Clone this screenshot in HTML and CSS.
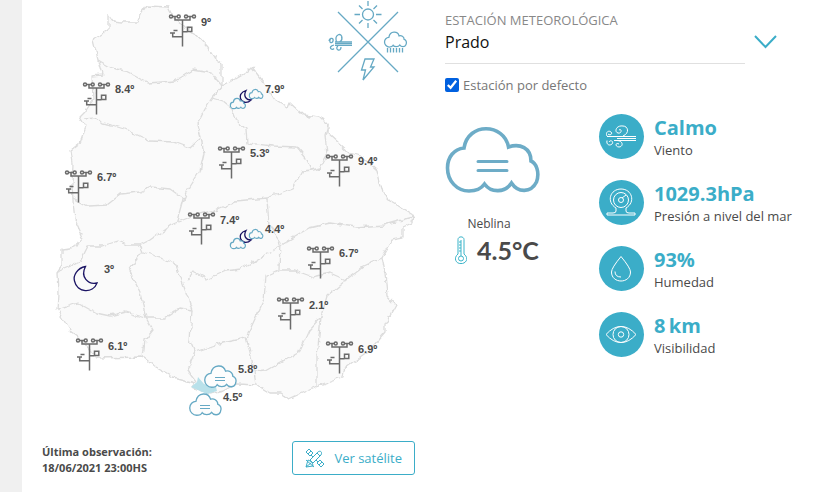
FILE: index.html
```
<!DOCTYPE html>
<html lang="es">
<head>
<meta charset="utf-8">
<title>Estado actual</title>
<link rel="stylesheet" href="styles.css">
</head>
<body>
<main class="panel">
  <section class="overview">
    <svg class="map" viewBox="42 0 373 420" role="img" aria-label="Mapa de estaciones">
      <defs>
        <filter id="coast" x="-5%" y="-5%" width="110%" height="110%">
          <feTurbulence type="fractalNoise" baseFrequency="0.13" numOctaves="2" seed="4" result="n"/>
          <feDisplacementMap in="SourceGraphic" in2="n" scale="6" xChannelSelector="R" yChannelSelector="G"/>
        </filter>
        <g id="mast" fill="none" stroke="#6b6b6b" stroke-width="1.500">
          <circle cx="2" cy="2" r="1.5"/><circle cx="9.7" cy="2" r="1.5"/><circle cx="17" cy="2" r="1.5"/><circle cx="25" cy="2" r="1.5"/>
          <path d="M3.5 2H8M18.500 2H23.500M6 2.500V5.500H21V2.500M13.500 5.500V32M13.500 17.200H18.500M18.500 12.700h4.300v4.300h-4.300zM13.500 22.200H3.700V18.500M1 18.500H6M4.500 16h4"/>
        </g>
        <path id="cloud" d="M18 22C9 22 1 30 1 40C1 51 10 60 20 60C27 60 33 57 35 53C40 60 55 61 61 52C66 60 80 62 85 51C90 41 85 32 78 30C78 18 66 13 58 16C53-3 23-5 18 22Z" transform="translate(1 1)"/>
        <g id="fog">
          <use href="#cloud" transform="scale(.365)" fill="#fdfdfd" stroke="#66a9c4" stroke-width="3.600"/>
          <path d="M11 12.500H21M11 15.500H21" stroke="#66a9c4"/>
        </g>
        <g id="night">
          <path d="M16 4.500C12 6 9.500 9 10.500 12.500C11.500 16.500 17 18 21 14C16 14 13 10 16 4.500Z" fill="none" stroke="#1b1464" stroke-width="1.300"/>
          <use href="#cloud" transform="translate(0 12) scale(.175)" fill="#fafafa" stroke="#66a9c4" stroke-width="7"/>
          <use href="#cloud" transform="translate(19 3) scale(.157)" fill="#fafafa" stroke="#66a9c4" stroke-width="7"/>
        </g>
      </defs>
      <g filter="url(#coast)" stroke="#dcdcdc" stroke-width="1.300" stroke-linejoin="round">
        <path fill="#fafafa" d="M108 14L113 21L123 22L138 22L142 13L147 6L168 7L172 15L184 28L195 33L208 47L215 58L222 63L222 86L235 79L247 72L252 67L262 80L275 100L287 107L289 102L303 115L320 117L328 125L328 133L350 153L363 157L377 170L383 193L392 202L413 215L412 223L403 227L403 238L392 240L382 258L385 272L387 295L396 305L385 325L385 332L367 353L343 370L342 377L317 386L289 399L280 393L270 393L257 385L237 384L224 391L208 394L192 387L195 383L173 377L155 367L143 357L97 358L77 335L70 330L57 310L58 295L57 272L62 265L62 250L75 248L82 235L75 220L73 200L72 185L73 163L71 150L80 143L86 127L80 117L85 112L93 100L92 76L102 75L98 60L93 40L108 30Z"/>
        <g fill="none">
          <path d="M98 60L112 68L125 71L148 83L175 81L193 70L211 73L222 86L212 98L205 108L197 124L201 138L190 148L174 142L150 141L125 129L112 125L102 123L95 117L85 118"/>
          <path d="M212 98L222 101L233 110L237 121L246 129L247 143L273 146L297 147L306 158L312 170L320 168L327 155L325 135L328 125"/>
          <path d="M201 138L204 153L200 171L188 190L184 200L178 222L171 225M73 198L88 206L107 205L121 194L140 192L151 187L170 189L184 199"/>
          <path d="M171 225L150 240L140 245L128 245L118 241L102 246L88 246L80 262L57 272M140 245L143 252L163 258L176 265L181 279L187 295L192 310L180 308L165 318L146 318L140 292L129 270L142 252"/>
          <path d="M178 223L200 214L218 209L236 201L267 198L293 188L302 171L312 170M267 198L269 226L280 242L279 270L266 276L264 300L246 338L218 344L195 352L187 370L196 382"/>
          <path d="M187 280L193 272L207 279L225 271L241 269L263 256L284 243L309 228L330 223L356 227L384 225L413 217"/>
          <path d="M280 270L294 270L313 277L330 273L346 280L363 267L382 258M346 280L327 296L321 317L309 330L299 352L265 371L255 372L246 338"/>
          <path d="M57 310L78 303L96 313L110 316L126 312L146 318L153 330L145 340L143 357M192 310L190 340L195 352M321 317L317 356L317 385M255 372L257 385"/>
        </g>
      </g>
      <path d="M191 387L197 382L198 377L204 384L216 387L217 391L207 394Z" fill="#b9e1ea"/>

      <g stroke="#66a9c4" fill="none" stroke-width="1.300">
        <path d="M338 12L398 72M398 12L338 72"/>
        <circle cx="368" cy="14.500" r="5.500"/>
        <path d="M368 1V6M368 23V28M354.500 14.500H360M376 14.500H381.500M359 5.500L362.500 9M377 5.500L373.500 9M359 23.500L362.500 20M377 23.500L373.500 20M365 59H374L370.500 67H374L363 80L365.500 70H361.500Z"/>
        <use href="#cloud" transform="translate(384 31.500) scale(.255)" stroke-width="5"/>
        <path d="M387.500 48V52.500M390.500 48V52.500M393.500 48V52.500M396.500 48V52.500M399.500 48V52.500M402.500 48V52.500"/>
        <path d="M335 42H352M335 43.700H352M335 45.400H352M336 41.800C340 43 343 40 341.500 37M336.500 42C334 34 342 32 342 38M329 41C330 37 334 38 333 41S328 43 331 38M334 45C327 47 332 51 334 48.500M338 46C334 49 341 53 341 47"/>
      </g>

      <use href="#mast" x="169" y="14.500"/><use href="#mast" x="83" y="82.500"/><use href="#mast" x="218" y="146.500"/><use href="#mast" x="326" y="154.500"/><use href="#mast" x="65" y="170.500"/><use href="#mast" x="188" y="212.500"/><use href="#mast" x="307" y="246.500"/><use href="#mast" x="277" y="297.500"/><use href="#mast" x="76" y="338.500"/><use href="#mast" x="326" y="341.500"/>
      <use href="#night" x="230" y="86"/><use href="#night" x="230" y="226"/>
      <path d="M85.500 266.500C77 268 73 276 74.500 281C77 293 93 294 97 283C88 285 80 277 85.500 266.500Z" fill="none" stroke="#1b1464" stroke-width="1.300"/>
      <use href="#fog" x="204" y="365"/><use href="#fog" x="189" y="393"/>
      <g class="temps">
        <text x="201" y="26">9º</text><text x="115" y="93">8.4º</text><text x="265" y="93">7.9º</text><text x="250" y="157">5.3º</text><text x="358" y="165">9.4º</text><text x="97" y="181">6.7º</text><text x="220" y="224">7.4º</text><text x="265" y="233">4.4º</text><text x="339" y="257">6.7º</text><text x="104" y="273">3º</text><text x="309" y="309">2.1º</text><text x="108" y="350">6.1º</text><text x="358" y="353">6.9º</text><text x="238" y="373">5.8º</text><text x="223" y="401">4.5º</text>
      </g>
    </svg>
    <footer class="map-foot">
      <p class="updated">Última observación:<br>18/06/2021 23:00HS</p>
      <button class="satellite" type="button">
        <svg width="20" height="20" viewBox="0 0 20 20" fill="none" stroke="currentColor" aria-hidden="true">
          <path d="M1 4L4 1L8 5L5 8ZM3 6L6 3M12 15L15 12L19 16L16 19ZM14 17L17 14M5 12L12 5C14 2 18 3 16 7L8 15ZM6 7L8 9M11 12L13 14M1 12L9 19M1 19L3 12C6 13 8 15 8 18ZM1 19L6 15M12 5L15 8"/>
        </svg>
        Ver satélite
      </button>
    </footer>
  </section>

  <section class="station">
    <div class="picker">
      <div class="picker-field">
        <label for="station">ESTACIÓN METEOROLÓGICA</label>
        <select id="station"><option>Prado</option></select>
      </div>
      <svg class="chevron" width="24" height="16" viewBox="0 0 24 16" fill="none" stroke="#3badc8" stroke-width="2" aria-hidden="true"><path d="M2 2L12.500 13L23 2"/></svg>
    </div>
    <label class="default"><input type="checkbox" checked>Estación por defecto</label>

    <div class="readings">
      <div class="now">
        <svg class="now-icon" width="96" height="72" viewBox="0 0 96 72" fill="none" stroke="#6dacc7" stroke-width="3.600" aria-hidden="true">
          <path d="M19 22C9 23 2.500 31 2.500 42C2.500 55 12 65 24 65C31 65 36 63 39.500 58C46 67 60 67 66.500 57C73 67 86 67 91.500 56C95 46 91 37 86 35C86 22 75 17 63.500 21C59-3 23-4 19 22Z"/>
          <path d="M33 35.500H62M33 44.500H62" stroke-linecap="round" stroke-width="3"/>
        </svg>
        <p class="condition">Neblina</p>
        <p class="temperature">
          <svg width="12" height="28" viewBox="0 0 12 28" fill="none" stroke="#3bb4c9" aria-hidden="true">
            <path d="M3 18V3.500C3 0 9 0 9 3.500V18C15 23 10 28 6 27.500C1 28-2 22 3 18Z"/><circle cx="6" cy="22.500" r="2.500"/><path d="M6 4V20M4 6H6M4 9H6M4 12H6M4 15H6"/>
          </svg>
          4.5°C
        </p>
      </div>
      <ul class="metrics">
        <li>
          <span class="badge"><svg viewBox="0 0 45 45"><path d="M15 22.500H37M18 24.500H37M15 26.500H37M8 22.500H15M24 22C31 19 29 12 24 12C17 11 15 18 19 19C23 20 23 14 20 16M8 22C6 18 10 16 12 18S11 22 9 20M8 26.500C7 31 11 32 13 30S12 25 10 28M18 26.500C25 27 24 33 20 33C16 33 16 28 20 30"/></svg></span>
          <div><strong>Calmo</strong><span>Viento</span></div>
        </li>
        <li>
          <span class="badge"><svg viewBox="0 0 45 45"><path d="M17 31V28C7 22 11 9 22 9S37 22 27 28V31Q27 33 30 33H36V35H8V33H14Q17 33 17 31"/><circle cx="22" cy="20" r="7.500"/><circle cx="22" cy="20" r="2.500"/><path d="M23 18L27 15"/></svg></span>
          <div><strong>1029.3hPa</strong><span>Presión a nivel del mar</span></div>
        </li>
        <li>
          <span class="badge"><svg viewBox="0 0 45 45"><path d="M22 10.500Q12.500 22 12.500 26C12.500 38 31.500 38 31.500 26Q31.500 22 22 10.500ZM16 25.500Q16 31 22 31"/></svg></span>
          <div><strong>93%</strong><span>Humedad</span></div>
        </li>
        <li>
          <span class="badge"><svg viewBox="0 0 45 45"><path d="M7 22.500Q14 14.500 22 14.500T37 22.500Q30 30.500 22 30.500T7 22.500Z"/><circle cx="22" cy="22.500" r="8"/><circle cx="22" cy="22.500" r="2.700"/></svg></span>
          <div><strong>8&thinsp;km</strong><span>Visibilidad</span></div>
        </li>
      </ul>
    </div>
  </section>
</main>
</body>
</html>
```
FILE: styles.css
```
* { box-sizing: border-box; }

body {
  margin: 0;
  background: #f0f0f0;
  color: #4a4a4a;
  font: 13px/16px "Open Sans", sans-serif;
}

p, ul { margin: 0; padding: 0; }

.panel {
  display: grid;
  grid-template-columns: 373fr 351fr;
  gap: 30px;
  min-height: 100vh;
  margin-left: 22px;
  padding: 0 24px 16px 20px;
  background: #fff;
}

.map { display: block; width: 100%; }

.temps {
  fill: #4a4a4a;
  font: bold 11px "Liberation Sans", sans-serif;
}

.map-foot {
  display: flex;
  justify-content: space-between;
  align-items: center;
  margin-top: 20px;
}

.updated {
  padding-top: 4px;
  font-size: 11px;
  font-weight: bold;
}

.satellite {
  display: flex;
  align-items: center;
  gap: 9px;
  height: 34px;
  padding: 0 12px;
  border: 1px solid #3badc8;
  border-radius: 3px;
  background: #fff;
  color: #3badc8;
  font: 13px "Open Sans", sans-serif;
}

.station { padding-top: 12px; }

.picker {
  display: flex;
  align-items: center;
  gap: 8px;
}

.picker-field {
  flex: 0 1 300px;
  border-bottom: 1px solid #e0e0e0;
}

.picker-field label {
  display: block;
  color: #888;
}

.picker-field select {
  display: block;
  width: 100%;
  height: 35px;
  padding: 0 0 8px;
  border: 0;
  appearance: none;
  background: none;
  color: #111;
  font: 16px "Open Sans", sans-serif;
}

.chevron { margin-top: 8px; }

.default {
  display: flex;
  align-items: center;
  gap: 4px;
  margin-top: 13px;
  color: #777;
}

.default input {
  width: 14px;
  height: 14px;
  margin: 0;
  accent-color: #0060df;
}

.readings {
  display: flex;
  gap: 58px;
  margin-top: 21px;
}

.now { flex: 0 0 96px; }

.now-icon {
  display: block;
  margin-top: 12px;
}

.condition {
  margin-top: 18px;
  padding-right: 8px;
  font-size: 12px;
  text-align: center;
}

.temperature {
  display: flex;
  align-items: center;
  gap: 10px;
  margin-top: 4px;
  padding-left: 10px;
  font: bold 25px/28px Lato, sans-serif;
  white-space: nowrap;
}

.metrics {
  display: grid;
  align-content: start;
  gap: 21px;
  list-style: none;
  white-space: nowrap;
}

.metrics li {
  display: flex;
  gap: 10px;
}

.badge {
  width: 45px;
  height: 45px;
  border-radius: 50%;
  background: #3badc8;
}

.badge svg {
  display: block;
  fill: none;
  stroke: #fff;
}

.metrics strong {
  display: block;
  color: #3badc8;
  font-size: 20px;
  line-height: 28px;
}

.metrics span { display: block; }
```
